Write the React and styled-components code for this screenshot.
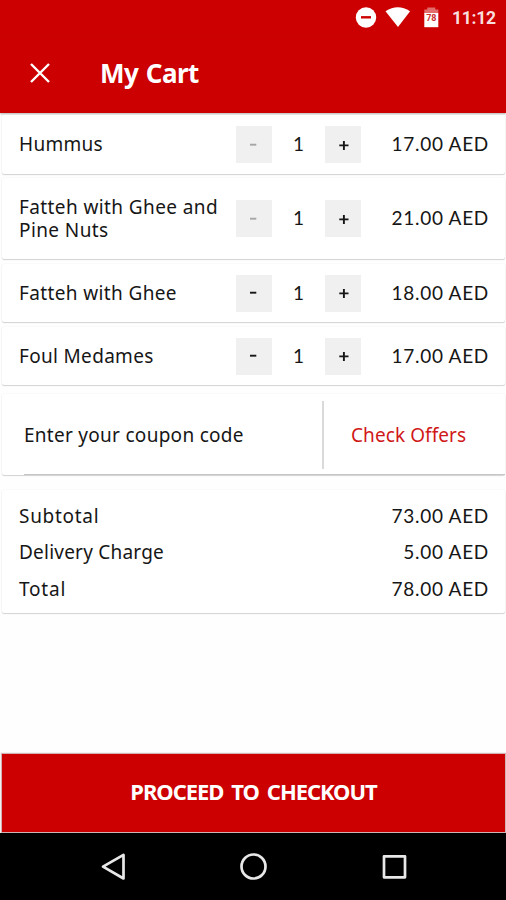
import React from 'react';
import styled, { createGlobalStyle } from 'styled-components';

const GlobalStyle = createGlobalStyle`
  * { box-sizing: border-box; }
  body { margin: 0; background: #fefefe; }
  button { font: inherit; border: 0; padding: 0; margin: 0; background: none; }
`;

const Screen = styled.div`
  width: 506px;
  height: 900px;
  display: flex;
  flex-direction: column;
  overflow: hidden;
  background: #fefefe;
  color: #161616;
  font: 19px/23px "Noto Sans", sans-serif;
`;

const StatusBar = styled.div`
  height: 36px;
  flex: none;
  display: flex;
  align-items: center;
  justify-content: flex-end;
  background: #cc0000;
  padding-right: 10px;
`;

const StatusIcons = styled.svg`
  display: block;
  margin-right: 12px;
`;

const Clock = styled.span`
  width: 44px;
  color: #f9dede;
  font: bold 17.5px/36px Roboto, sans-serif;
  letter-spacing: -0.25px;
  white-space: nowrap;
`;

const Header = styled.header`
  height: 77px;
  flex: none;
  display: flex;
  align-items: center;
  background: #cc0000;
  padding: 0 0 3px 30px;
  box-shadow: 0 1px 2px rgba(0, 0, 0, 0.3);
`;

const Title = styled.h1`
  margin: 0 0 0 50px;
  color: #fff;
  font: bold 26px/36px "Noto Sans", sans-serif;
  letter-spacing: -0.6px;
  word-spacing: 1.5px;
`;

const Content = styled.main`
  flex: 1;
  display: flex;
  flex-direction: column;
  padding: 2px 1px 0 2px;
`;

const Card = styled.section`
  flex: none;
  background: #fff;
  border-radius: 2px;
  box-shadow: 0 1px 1px rgba(0, 0, 0, 0.16), 0 0 2px rgba(0, 0, 0, 0.07);
`;

const CartItem = styled(Card)`
  height: ${(p) => p.$height}px;
  margin-bottom: ${(p) => p.$gap}px;
  display: grid;
  grid-template-columns: 217px 125px 1fr;
  align-items: center;
  padding: 0 17px 0 17px;
`;

const Label = styled.span`
  display: block;
  max-width: 250px;
  letter-spacing: ${(p) => p.$tracking || 0}px;
`;

const Stepper = styled.div`
  display: grid;
  grid-template-columns: 36px 53px 36px;
  align-items: center;
  text-align: center;
`;

const Quantity = styled.span`
  font-family: Lato, sans-serif;
  padding-bottom: 2px;
`;

const StepButton = styled.button`
  && {
    width: 36px;
    height: 37px;
    background: #f0f0f0;
    display: grid;
    place-items: center;
    color: ${(p) => (p.disabled ? '#a6a6a6' : '#161616')};
  }
`;

const Amount = styled.span`
  font-family: Lato, sans-serif;
  letter-spacing: 0.7px;
  margin-right: -1px;
  padding-bottom: ${(p) => (p.$raised ? 2 : 0)}px;
  text-align: right;
  white-space: nowrap;
`;

const Coupon = styled(Card)`
  height: 81px;
  margin-bottom: 15px;
  display: grid;
  grid-template-columns: 298px 1fr;
  padding-left: 22px;
`;

const CouponField = styled.div`
  display: flex;
  align-items: center;
  padding-top: 2px;
  border-bottom: 1px solid #c6c6c6;
`;

const Offers = styled.div`
  display: flex;
  align-items: center;
  padding-top: 2px;
  border-bottom: 1px solid #c6c6c6;
`;

const Divider = styled.i`
  width: 2px;
  height: 68px;
  background: #dadada;
  margin-bottom: 1px;
`;

const OffersLink = styled.button`
  && {
    color: #d01818;
    margin-left: 27px;
  }
`;

const Summary = styled(Card)`
  height: 123px;
  padding: 7px 17px 0 17px;
`;

const SummaryRow = styled.div`
  height: 36.5px;
  display: flex;
  align-items: center;
  justify-content: space-between;

  ${Label} {
    padding-top: 1.5px;
  }
`;

const Checkout = styled.button`
  && {
    height: 78px;
    flex: none;
    margin: 0 1px 1px 2px;
    padding-bottom: 4px;
    background: #cc0000;
    box-shadow: 0 0 1px 1px rgba(120, 40, 40, 0.35);
    color: #fff;
    font: bold 22px/30px "Noto Sans", sans-serif;
    letter-spacing: -1.05px;
    word-spacing: 3.3px;
  }
`;

const NavBar = styled.nav`
  height: 67px;
  flex: none;
  background: #000;
`;

const items = [
  { name: 'Hummus', tracking: 0.3, price: '17.00 AED', height: 59, gap: 4, locked: true },
  { name: 'Fatteh with Ghee and Pine Nuts', tracking: 0.4, price: '21.00 AED', height: 81, gap: 5, locked: true },
  { name: 'Fatteh with Ghee', tracking: 0.37, price: '18.00 AED', height: 58, gap: 5 },
  { name: 'Foul Medames', tracking: 0.32, price: '17.00 AED', height: 58, gap: 9 },
];

const totals = [
  ['Subtotal', 0.7, '73.00 AED'],
  ['Delivery Charge', 0.22, '5.00 AED'],
  ['Total', 0.8, '78.00 AED'],
];

function Sign({ plus }) {
  return (
    <svg width="12" height="12" viewBox="0 0 12 12" stroke="currentColor" strokeWidth="1.9">
      <path d={plus ? 'M2.3 6.4h9.2M6.9 1.9v9' : 'M2 5.7h6.3'} />
    </svg>
  );
}

export default function App() {
  return (
    <Screen>
      <GlobalStyle />
      <StatusBar>
        <StatusIcons width="86" height="24" viewBox="354 6 86 24">
          <circle cx="366" cy="17.5" r="10.2" fill="#fff" />
          <path d="M361 17.3h10" stroke="#cc0000" strokeWidth="2.4" />
          <path d="M385.5 11.2q12.3-8 24.6 0L398 27z" fill="#fff" />
          <path d="M424.3 9.5h3v-2h8v2h3V14h-14z" fill="#e26d6d" />
          <path d="M424.3 13h14v14.2h-14z" fill="#fff" />
          <text x="431.3" y="20.5" textAnchor="middle" fill="#cc3030" fontFamily="Roboto" fontSize="9" fontWeight="bold">78</text>
        </StatusIcons>
        <Clock>11:12</Clock>
      </StatusBar>
      <Header>
        <svg width="20" height="20" viewBox="0 0 20 20" stroke="#fff" strokeWidth="2.4">
          <path d="M1 1l18 18M19 1L1 19" />
        </svg>
        <Title>My Cart</Title>
      </Header>
      <Content>
        {items.map((item) => (
          <CartItem key={item.name} $height={item.height} $gap={item.gap}>
            <Label $tracking={item.tracking}>{item.name}</Label>
            <Stepper>
              <StepButton disabled={item.locked} aria-label="Decrease"><Sign /></StepButton>
              <Quantity>1</Quantity>
              <StepButton aria-label="Increase"><Sign plus /></StepButton>
            </Stepper>
            <Amount $raised>{item.price}</Amount>
          </CartItem>
        ))}
        <Coupon>
          <CouponField>
            <Label $tracking={0.28}>Enter your coupon code</Label>
          </CouponField>
          <Offers>
            <Divider />
            <OffersLink><Label $tracking={0.08}>Check Offers</Label></OffersLink>
          </Offers>
        </Coupon>
        <Summary>
          {totals.map(([name, tracking, value]) => (
            <SummaryRow key={name}>
              <Label $tracking={tracking}>{name}</Label>
              <Amount>{value}</Amount>
            </SummaryRow>
          ))}
        </Summary>
      </Content>
      <Checkout>PROCEED TO CHECKOUT</Checkout>
      <NavBar>
        <svg width="506" height="67" viewBox="0 833 506 67" fill="none" stroke="#e8e8e8" strokeWidth="2.7" strokeLinejoin="round">
          <path d="M103 866.7l20.5-11.8v23.6z" />
          <circle cx="253.5" cy="866.5" r="12" />
          <rect x="384" y="856.3" width="21" height="21" />
        </svg>
      </NavBar>
    </Screen>
  );
}
